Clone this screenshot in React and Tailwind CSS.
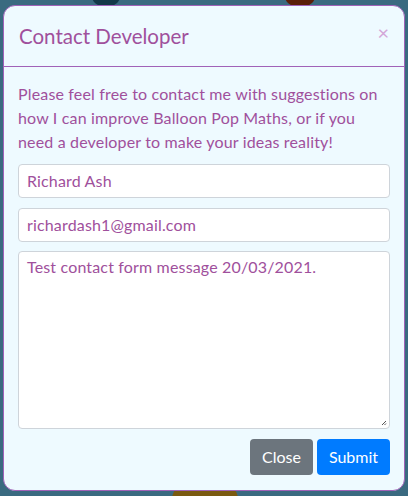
export default function App() {
  const font = { fontFamily: 'Lato, sans-serif' };
  return (
    <div className="relative w-[408px] h-[496px] overflow-hidden bg-[#3a6a80] pt-[5px] px-[3px]" style={font}>
      <div className="absolute left-[92px] top-[-14px] w-[28px] h-[20px] rounded-full bg-[#123848]" />
      <div className="absolute left-[285px] top-[-14px] w-[30px] h-[20px] rounded-full bg-[#5a1e08]" />
      <div className="absolute left-[172px] top-[484px] w-[66px] h-[30px] rounded-full bg-[#7a5a10]" />
      <div className="relative flex h-[486px] flex-col rounded-[12px] border border-[#a062b8] bg-[#eefaff]">
        <div className="flex h-[61px] items-center justify-between border-b border-[#a062b8] pl-[15px] pr-[15px]">
          <h5 className="text-[20.5px] leading-[30px] text-[#a0509c]">Contact Developer</h5>
          <span className="text-[20px] leading-none text-[#d3a6d8] -mt-[8px]">×</span>
        </div>
        <div className="flex flex-1 flex-col px-[14px] pt-[15px]">
          <p className="text-[16px] leading-[24px] tracking-[0.01em] text-[#a0509c]">
            Please feel free to contact me with suggestions on how I can improve Balloon Pop Maths, or if you need a developer to make your ideas reality!
          </p>
          <div className="mt-[10px] flex h-[34px] items-center rounded-[4px] border border-[#ced4da] bg-white px-[8px] text-[16px] tracking-[0.01em] text-[#a0509c]">Richard Ash</div>
          <div className="mt-[10px] flex h-[34px] items-center rounded-[4px] border border-[#ced4da] bg-white px-[8px] text-[16px] tracking-[0.01em] text-[#a0509c]">richardash1@gmail.com</div>
          <div className="relative mt-[9px] h-[178px] rounded-[4px] border border-[#ced4da] bg-white px-[8px] pt-[3px] text-[16px] leading-[24px] tracking-[0.01em] text-[#a0509c]">
            Test contact form message 20/03/2021.
            <svg className="absolute right-[2px] bottom-[2px]" width="6" height="6" viewBox="0 0 6 6">
              <path d="M5 1 L1 5 M5 3.5 L3.5 5" stroke="#555" strokeWidth="1" />
            </svg>
          </div>
          <div className="mt-[10px] flex justify-end gap-[4px]">
            <button className="h-[36px] w-[63px] rounded-[4px] bg-[#6c757d] text-[16px] text-white">Close</button>
            <button className="h-[36px] w-[73px] rounded-[4px] bg-[#007bff] text-[16px] text-white">Submit</button>
          </div>
        </div>
      </div>
    </div>
  );
}
